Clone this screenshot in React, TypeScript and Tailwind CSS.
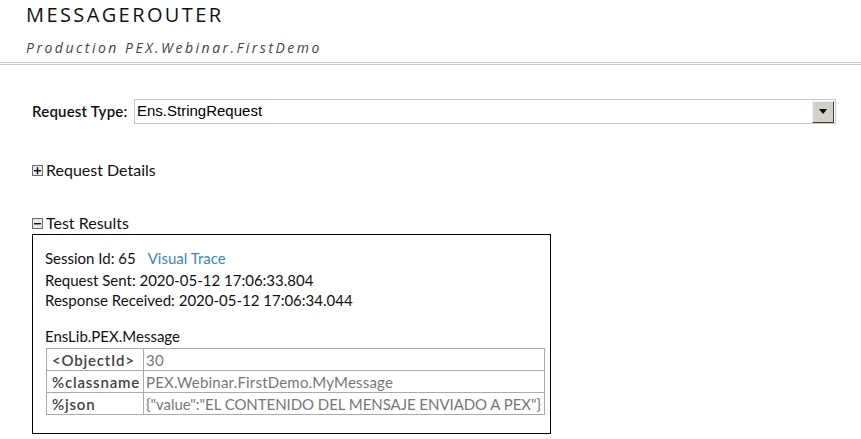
import React from "react";

const body = { fontFamily: "Lato, 'Noto Sans', sans-serif" };

function PlusMinus({ open }: { open: boolean }) {
  return (
    <svg width="11" height="11" viewBox="0 0 11 11" className="shrink-0">
      <rect x="0.5" y="0.5" width="10" height="10" fill="#e8e8e8" stroke="#6b6b6b" />
      <rect x="2" y="5" width="7" height="1.4" fill="#111" />
      {!open && <rect x="4.8" y="2.2" width="1.4" height="7" fill="#111" />}
    </svg>
  );
}

const rows = [
  { k: "<ObjectId>", v: "30", tight: false },
  { k: "%classname", v: "PEX.Webinar.FirstDemo.MyMessage", tight: false },
  { k: "%json", v: '{"value":"EL CONTENIDO DEL MENSAJE ENVIADO A PEX"}', tight: true },
];

export default function App() {
  return (
    <div className="w-[861px] h-[439px] overflow-hidden bg-white text-black">
      <header className="px-[26px] pt-[3px]">
        <h1
          className="text-[20px] leading-[24px] tracking-[2.4px] text-[#111]"
          style={{ fontFamily: "'Open Sans', sans-serif" }}
        >
          MESSAGEROUTER
        </h1>
        <p
          className="mt-[11px] text-[14px] leading-[19px] italic tracking-[2.5px] text-[#444]"
          style={{ fontFamily: "'Open Sans', sans-serif" }}
        >
          Production PEX.Webinar.FirstDemo
        </p>
      </header>
      <div className="mt-[5px] h-[3px] border-y border-[#cccccc]" />

      <main className="pl-[32px] pt-[34px]" style={body}>
        <div className="flex items-center gap-[6px] whitespace-nowrap">
          <span className="w-[96px] text-[15px] font-semibold tracking-[0.2px] text-[#111]">Request Type:</span>
          <div className="flex h-[25px] w-[702px] shrink-0 items-center justify-between border border-[#c8c8c8] bg-white pl-[2px] pr-px">
            <span
              className="text-[15px] text-black"
              style={{ fontFamily: "'Liberation Sans', Arial, sans-serif" }}
            >
              Ens.StringRequest
            </span>
            <span className="flex h-[22px] w-[22px] items-center justify-center border border-t-[#f4f2ee] border-l-[#f4f2ee] border-r-[#404040] border-b-[#404040] bg-[#d4d0c8]">
              <svg width="8" height="5" viewBox="0 0 8 5">
                <path d="M0 0 H8 L4 5 Z" fill="#000" />
              </svg>
            </span>
          </div>
        </div>

        <div className="mt-[36px] flex items-center gap-[3px]">
          <PlusMinus open={false} />
          <span className="text-[16px] leading-[20px] text-[#111]">Request Details</span>
        </div>

        <div className="mt-[33px] flex items-center gap-[3px]">
          <PlusMinus open={true} />
          <span className="text-[16px] leading-[20px] text-[#111]">Test Results</span>
        </div>

        <section className="mt-px h-[200px] w-[519px] border border-black px-[12px] pt-[13px]">
          <div className="text-[15px] leading-[20px] text-[#111]">
            <div>
              Session Id: 65
              <span className="ml-[12px] text-[#3b86c4]">Visual Trace</span>
            </div>
            <div className="mt-[2px]">Request Sent: 2020-05-12 17:06:33.804</div>
            <div>Response Received: 2020-05-12 17:06:34.044</div>
          </div>
          <div className="mt-[16px] mb-px text-[15px] leading-[21px] text-[#111]">EnsLib.PEX.Message</div>
          <table className="ml-px w-[499px] table-fixed border-collapse border border-[#333] text-[15px] leading-[20px]">
            <colgroup>
              <col className="w-[97px]" />
              <col />
            </colgroup>
            <tbody>
              {rows.map((r) => (
                <tr key={r.k} className="h-[22px]">
                  <td className="whitespace-nowrap border border-[#aaa] px-[5px] font-semibold tracking-[0.8px] text-[#444]">
                    {r.k}
                  </td>
                  <td
                    className={
                      r.tight
                        ? "whitespace-nowrap border border-[#aaa] px-[2px] tracking-[-0.05px] text-[#777]"
                        : "whitespace-nowrap border border-[#aaa] px-[2px] tracking-[0.2px] text-[#777]"
                    }
                  >
                    {r.v}
                  </td>
                </tr>
              ))}
            </tbody>
          </table>
        </section>
      </main>
    </div>
  );
}
